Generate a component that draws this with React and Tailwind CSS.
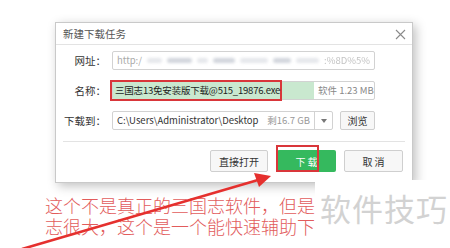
import React from 'react';

const ui = { fontFamily: '"Noto Sans CJK SC", "Noto Sans", sans-serif' };

function Blur({ w, tone = 'bg-gray-300' }) {
  return <span className={`inline-block h-[5px] ${tone} rounded-full blur-[1.5px]`} style={{ width: w }} />;
}

function Label({ children }) {
  return <div className="w-[52px] shrink-0 text-right text-[10.5px] text-[#333] pr-[2px] whitespace-nowrap">{children}</div>;
}

export default function App() {
  return (
    <div className="relative w-[450px] h-[248px] overflow-hidden bg-white" style={ui}>
      {/* dialog */}
      <div className="ml-[55px] mt-[22px] w-[358px] h-[161px] bg-white border border-[#c9c9c9] shadow-[3px_3px_10px_rgba(0,0,0,0.25)] flex flex-col">
        <div className="h-[22px] border-b border-[#e3e3e3] flex items-center justify-between pl-[7px] pr-[6px]">
          <span className="text-[10.5px] text-[#555]">新建下载任务</span>
          <svg width="11" height="11" viewBox="0 0 11 11" className="mt-[1px]">
            <path d="M1 1 L10 10 M10 1 L1 10" stroke="#8a8a8a" strokeWidth="1.1" />
          </svg>
        </div>

        <div className="flex flex-col gap-[11px] pt-[6px] pr-[37px]">
          <div className="flex items-center gap-[4px]">
            <Label>网址：</Label>
            <div className="flex-1 h-[19px] border border-[#d2d2d2] rounded-[2px] flex items-center px-[4px] gap-[5px] text-[9.5px] text-[#aaa] overflow-hidden whitespace-nowrap">
              <span>http:/</span>
              <Blur w={18} tone="bg-gray-200" />
              <Blur w={30} />
              <Blur w={14} tone="bg-gray-200" />
              <Blur w={26} />
              <Blur w={34} tone="bg-gray-200" />
              <Blur w={22} />
              <Blur w={28} tone="bg-gray-200" />
              <span className="ml-auto text-[#c4c4c4] blur-[0.5px]">:%8D%5%</span>
            </div>
          </div>

          <div className="flex items-center gap-[4px]">
            <Label>名称：</Label>
            <div className="relative flex-1 h-[19px] border border-[#d2d2d2] rounded-[2px] flex items-center text-[9.5px] whitespace-nowrap">
              <div className="h-full w-[201px] shrink-0 bg-[#c9e8cf]" />
              <span className="ml-[4px] text-[#888]">软件 1.23 MB</span>
              <div className="absolute left-[-3px] top-[-2px] w-[172px] h-[21px] border-2 border-[#d9363a] flex items-center pl-[3px] text-[9.5px] text-[#222] whitespace-nowrap tracking-[-0.2px]">
                三国志13免安装版下载@515_19876.exe
              </div>
            </div>
          </div>

          <div className="flex items-center gap-[4px]">
            <Label>下载到：</Label>
            <div className="flex-1 flex gap-[7px]">
              <div className="flex-1 h-[19px] border border-[#d2d2d2] rounded-[2px] flex items-center text-[9.5px] text-[#333] whitespace-nowrap">
                <span className="pl-[4px] flex-1">C:\Users\Administrator\Desktop</span>
                <span className="text-[9.5px] text-[#999] pr-[4px]">剩16.7 GB</span>
                <div className="w-[18px] h-full border-l border-[#d2d2d2] flex items-center justify-center">
                  <svg width="6" height="4" viewBox="0 0 6 4"><path d="M0 0 H6 L3 4 Z" fill="#777" /></svg>
                </div>
              </div>
              <div className="w-[35px] h-[19px] border border-[#cfcfcf] rounded-[2px] bg-[#f7f7f7] flex items-center justify-center text-[10px] text-[#333]">
                浏览
              </div>
            </div>
          </div>
        </div>

        <div className="mx-[7px] mt-[11px] border-t border-[#e3e3e3]" />

        <div className="flex justify-end gap-[8px] pr-[9px] pt-[8px]">
          <div className="w-[58px] h-[22px] border border-[#cfcfcf] rounded-[2px] bg-[#f7f7f7] flex items-center justify-center text-[10px] text-[#333]">
            直接打开
          </div>
          <div className="relative w-[59px] h-[22px] ml-[1px] rounded-[2px] bg-[#35b95e] flex items-center justify-center text-[10px] text-white">
            下 载
            <div className="absolute left-[-1px] top-[-5px] w-[43px] h-[27px] border-2 border-[#d9363a]" />
          </div>
          <div className="w-[59px] h-[22px] border border-[#cfcfcf] rounded-[2px] bg-[#f7f7f7] flex items-center justify-center text-[10px] text-[#333]">
            取 消
          </div>
        </div>
      </div>

      {/* annotation */}
      <div className="ml-[45px] mt-[12px] text-[18px] leading-[21px] text-[#e25c5c] font-light whitespace-nowrap">
        <div>这个不是真正的三国志软件，但是</div>
        <div>志很大，这个是一个能快速辅助下</div>
      </div>

      {/* watermark */}
      <div className="absolute left-[315px] top-[180px] w-[135px] h-[68px] bg-white flex items-start pt-[9px] pl-[5px]">
        <span className="text-[31px] leading-[38px] text-[#d2d2d2] tracking-[1px]">软件技巧</span>
      </div>

      {/* arrow */}
      <svg className="absolute left-0 top-0 pointer-events-none" width="450" height="248" viewBox="0 0 450 248">
        <line x1="22" y1="249" x2="258" y2="180" stroke="#e5302e" strokeWidth="2.6" />
        <polygon points="271,176 254,173 259,187" fill="#e5302e" />
      </svg>
    </div>
  );
}
